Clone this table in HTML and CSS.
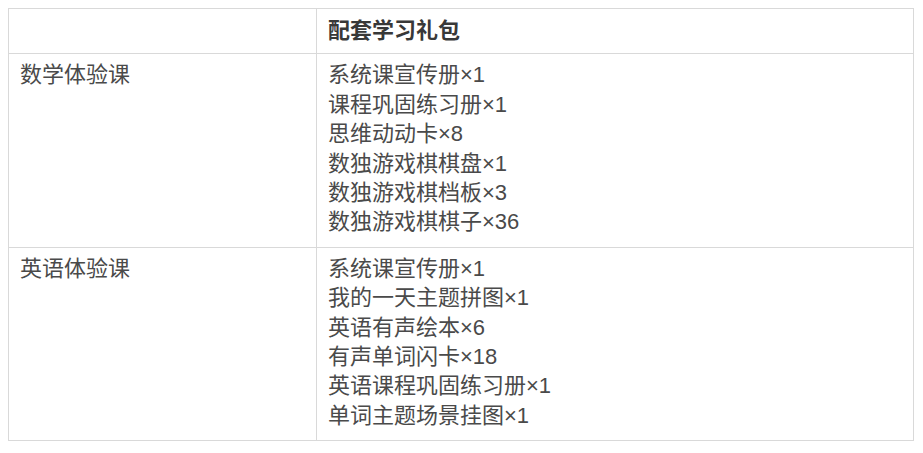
FILE: index.html
```html
<!DOCTYPE html>
<html lang="zh-CN">
<head>
<meta charset="utf-8">
<title>配套学习礼包</title>
<link rel="stylesheet" href="styles.css">
</head>
<body>
<table class="kit-table">
  <thead>
    <tr>
      <th class="col-course"></th>
      <th class="col-kit">配套学习礼包</th>
    </tr>
  </thead>
  <tbody>
    <tr>
      <td class="course">数学体验课</td>
      <td class="kit">
        <ul class="items">
          <li>系统课宣传册×1</li>
          <li>课程巩固练习册×1</li>
          <li>思维动动卡×8</li>
          <li>数独游戏棋棋盘×1</li>
          <li>数独游戏棋档板×3</li>
          <li>数独游戏棋棋子×36</li>
        </ul>
      </td>
    </tr>
    <tr>
      <td class="course">英语体验课</td>
      <td class="kit">
        <ul class="items">
          <li>系统课宣传册×1</li>
          <li>我的一天主题拼图×1</li>
          <li>英语有声绘本×6</li>
          <li>有声单词闪卡×18</li>
          <li>英语课程巩固练习册×1</li>
          <li>单词主题场景挂图×1</li>
        </ul>
      </td>
    </tr>
  </tbody>
</table>
</body>
</html>
```

FILE: styles.css
```css
html, body {
  background: #ffffff;
}
body {
  margin: 8px;
  font-family: "Liberation Sans", "Noto Sans CJK SC", sans-serif;
  font-size: 22px;
  line-height: 29.4px;
  color: #4a4a4a;
}
.kit-table {
  width: 906px;
  border-collapse: collapse;
  table-layout: fixed;
}
.kit-table th,
.kit-table td {
  border: 1px solid #d9d9d9;
  text-align: left;
  vertical-align: top;
}
.kit-table th {
  font-weight: bold;
  color: #383838;
  padding: 7px 11px 8px;
}
.col-course {
  width: 285px;
}
.kit-table td {
  padding: 6px 11px 10px;
}
.items {
  list-style: none;
  margin: 0;
  padding: 0;
}
```
